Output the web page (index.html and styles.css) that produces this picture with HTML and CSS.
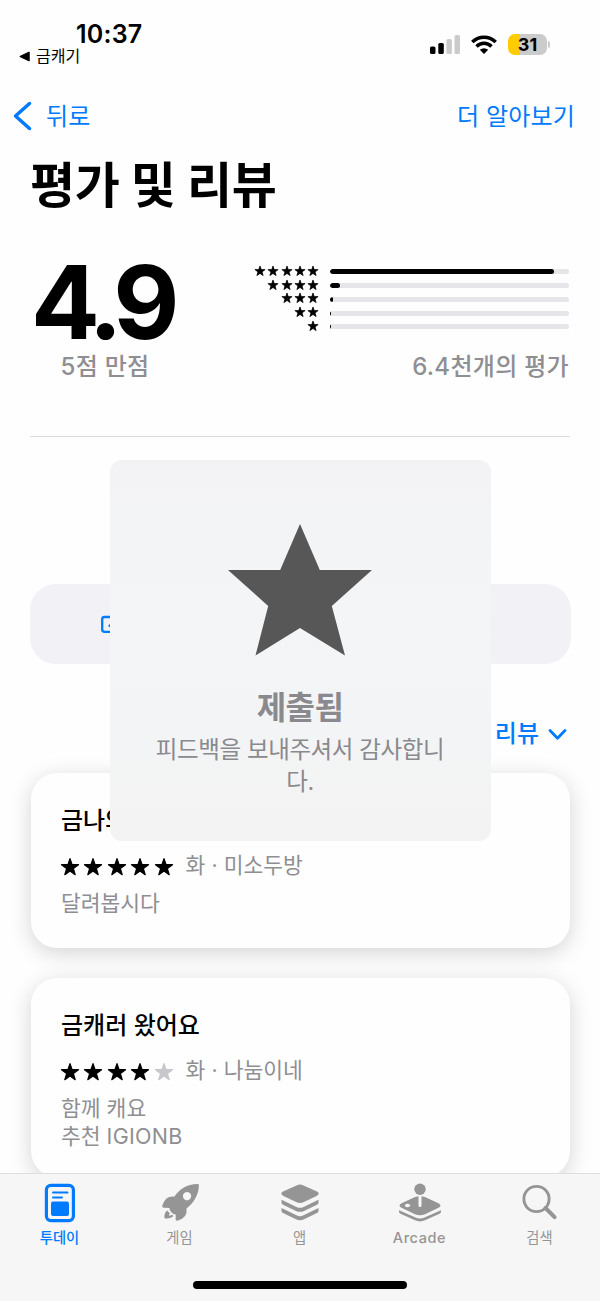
FILE: index.html
```html
<!DOCTYPE html>
<html lang="ko">
<head>
<meta charset="utf-8">
<title>평가 및 리뷰</title>
<link rel="stylesheet" href="styles.css">
</head>
<body>
<svg class="defs" width="0" height="0" aria-hidden="true">
  <symbol id="star" viewBox="0 0 20 20"><path d="M10 1.6 12.1 7.6 18.5 7.7 13.4 11.6 15.2 17.7 10 14.1 4.8 17.7 6.6 11.6 1.5 7.7 7.9 7.6Z" fill="currentColor" stroke="currentColor" stroke-width="1.2" stroke-linejoin="round"/></symbol>
</svg>
<div class="screen">
  <header class="status">
    <div class="status-left">
      <div class="clock">10:37</div>
      <div class="return"><svg width="11" height="11" viewBox="0 0 11 11"><path d="M.8 5.5 10.2 1v9z" stroke="#000" stroke-linejoin="round"/></svg><span>금캐기</span></div>
    </div>
    <div class="status-right">
      <svg width="30" height="19" viewBox="0 0 30 19"><rect y="11.5" width="5.5" height="7.5" rx="1.6"/><rect x="8.3" y="8" width="5.5" height="11" rx="1.6"/><g fill="#cbcbcb"><rect x="16.4" y="4" width="5.5" height="15" rx="1.6"/><rect x="24.5" width="5.5" height="19" rx="1.6"/></g></svg>
      <svg class="wifi" width="26" height="19" viewBox="0 0 26 19"><g fill="none" stroke="#000" stroke-width="3.5"><path d="M1.3 7.1C8 .5 18 .5 24.7 7.1"/><path d="M5.5 11.5C9.800 7.3 16.2 7.3 20.5 11.5"/></g><path d="M8.8 14.8Q13 11.5 17.2 14.8L13 19Z"/></svg>
      <div class="battery"><span>31</span></div><i class="battery-cap"></i>
    </div>
  </header>
  <nav class="nav">
    <a class="back"><svg width="19" height="30" viewBox="0 0 19 30"><path d="M16.5 2.5 2.5 15 16.5 27.5" fill="none" stroke="#007aff" stroke-width="3.5" stroke-linecap="round" stroke-linejoin="round"/></svg><span>뒤로</span></a>
    <a>더 알아보기</a>
  </nav>
  <main>
    <h1>평가 및 리뷰</h1>
    <section class="rating">
      <div class="score"><div class="num">4.9</div><div class="label">5점 만점</div></div>
      <div class="dist">
        <div class="rows">
          <div class="row"><div class="mini"><svg><use href="#star"/></svg><svg><use href="#star"/></svg><svg><use href="#star"/></svg><svg><use href="#star"/></svg><svg><use href="#star"/></svg></div><div class="bar"><i style="width:93.7%"></i></div></div>
          <div class="row"><div class="mini"><svg><use href="#star"/></svg><svg><use href="#star"/></svg><svg><use href="#star"/></svg><svg><use href="#star"/></svg></div><div class="bar"><i style="width:4.3%"></i></div></div>
          <div class="row"><div class="mini"><svg><use href="#star"/></svg><svg><use href="#star"/></svg><svg><use href="#star"/></svg></div><div class="bar"><i style="width:1.3%"></i></div></div>
          <div class="row"><div class="mini"><svg><use href="#star"/></svg><svg><use href="#star"/></svg></div><div class="bar"><i style="width:.2%"></i></div></div>
          <div class="row"><div class="mini"><svg><use href="#star"/></svg></div><div class="bar"><i style="width:.6%"></i></div></div>
        </div>
        <div class="label">6.4천개의 평가</div>
      </div>
    </section>
    <div class="write"><svg width="24" height="24" viewBox="0 0 24 24" fill="none" stroke="#007aff" stroke-width="2.3"><path d="M14 5H4.500Q2.200 5 2.200 7.200V17.500Q2.200 19.800 4.500 19.800H16Q18.300 19.800 18.300 17.500V10"/><path d="M8.800 14.500 20 3" stroke-width="2"/></svg></div>
    <div class="sort"><span>리뷰</span><svg width="19" height="13" viewBox="0 0 19 13"><path d="M2 2.500 9.500 10.200 17 2.500" fill="none" stroke="#007aff" stroke-width="2.800" stroke-linecap="round" stroke-linejoin="round"/></svg></div>
    <article class="card">
      <h2>금나와</h2>
      <div class="meta"><div class="stars"><svg><use href="#star"/></svg><svg><use href="#star"/></svg><svg><use href="#star"/></svg><svg><use href="#star"/></svg><svg><use href="#star"/></svg></div><span>화 · 미소두방</span></div>
      <p>달려봅시다</p>
    </article>
    <article class="card second">
      <h2>금캐러 왔어요</h2>
      <div class="meta"><div class="stars"><svg><use href="#star"/></svg><svg><use href="#star"/></svg><svg><use href="#star"/></svg><svg><use href="#star"/></svg><svg class="off"><use href="#star"/></svg></div><span>화 · 나눔이네</span></div>
      <p>함께 캐요<br>추천 <span class="latin">IGIONB</span></p>
    </article>
  </main>
  <div class="toast" role="status">
    <svg width="144" height="132" viewBox="0 0 144 132"><path d="M72 0 91.800 46H144L103.800 82 117 131.500 72 104 27.500 131.500 40.200 82 0 46H52.200Z" fill="#575757"/></svg>
    <strong>제출됨</strong>
    <p>피드백을 보내주셔서 감사합니<br>다.</p>
  </div>
  <footer class="tabs">
    <div class="tab-list">
      <div class="tab active"><svg width="44" height="40" viewBox="0 0 44 40"><rect x="8.400" y="2.400" width="27" height="35.200" rx="4.500" fill="none" stroke="currentColor" stroke-width="3.200"/><path d="M15 9.500H29.500M15 14.500H24" stroke="currentColor" stroke-width="2" stroke-linecap="round"/><rect x="13" y="18.500" width="18" height="14.500" rx="2" fill="currentColor"/></svg><span>투데이</span></div>
      <div class="tab"><svg width="44" height="40" viewBox="0 0 44 40"><path fill="currentColor" fill-rule="evenodd" d="M39.500 1Q41 .9 40.900 2.300C40.800 11 36.500 19.500 28.500 25.500Q29.800 34.500 20 37.500Q17.500 38.200 17.600 36L17.800 31.500Q15.500 31.800 13.600 29.500Q11 27.500 11.500 25L6 24.700Q3.500 24.600 4.600 21.800Q7.500 12.500 16.500 13.500C21.500 6 29 1 39.500 1ZM29 9a4.100 4.100 0 1 0 .1 0Z"/><path fill="currentColor" d="M9.200 27.500 12 30.500Q10.700 31.500 11 32.700Q13 32.500 13.600 31.700L15.400 32.800Q13.500 35.700 7.800 35.500Q6.300 35.500 6.400 34Q6.200 29.500 9.200 27.500Z"/></svg><span>게임</span></div>
      <div class="tab"><svg width="44" height="40" viewBox="0 0 44 40" fill="currentColor"><path d="M18.500 2.400Q22 .7 25.500 2.400L39 8.500Q42.500 10.500 39 12.700L26 19.100Q22 21 18 19.100L5 12.700Q1.500 10.500 5 8.500Z"/><path id="layer" d="M3.500 16.800 18.500 24Q22 25.700 25.500 24L40.500 16.800V20Q40.500 21 38.500 22L26 28Q22 29.700 18 28L5.500 22Q3.500 21 3.500 20Z"/><use href="#layer" y="8.300"/></svg><span>앱</span></div>
      <div class="tab"><svg width="44" height="40" viewBox="0 0 44 40" fill="currentColor"><circle cx="22" cy="6.200" r="5.700"/><path fill-rule="evenodd" d="M20.500 13.300V22.500Q20.500 24 22 24T23.500 22.500V13.300Q26 13.500 28 14.500L40.500 20.200Q44.500 22.500 40.500 24.800L27 31.200Q22 33.500 17 31.200L3.500 24.800Q-.5 22.500 3.500 20.200L16 14.500Q18 13.500 20.500 13.300ZM9.500 20.800a2.700 1.700 0 1 0 .1 0Z"/><path d="M1 27.200 17.500 34.500Q22 36.300 26.500 34.500L43 27.200V29Q43 30 41 31L27 37.300Q22 39.500 17 37.300L3 31Q1 30 1 29Z"/></svg><span class="latin">Arcade</span></div>
      <div class="tab"><svg width="44" height="40" viewBox="0 0 44 40" fill="none" stroke="currentColor"><circle cx="18.500" cy="16" r="12.600" stroke-width="2.900"/><path d="M27.500 25 36.600 34.200" stroke-width="4" stroke-linecap="round"/></svg><span>검색</span></div>
    </div>
    <div class="home"></div>
  </footer>
</div>
</body>
</html>
```
FILE: styles.css
```css
* { box-sizing: border-box; }
body { margin: 0; background: #fefefe; color: #000; font-family: Inter, "Noto Sans CJK KR", sans-serif; }
h1, h2, p { margin: 0; }
svg { display: block; flex: none; }
.defs { position: absolute; }
.screen { position: relative; width: 600px; height: 1301px; overflow: hidden; white-space: nowrap; }
.status { height: 86px; padding: 21px 50px 0 19px; display: flex; justify-content: space-between; }
.clock { padding-left: 57px; font-size: 25px; line-height: 26px; font-weight: 600; letter-spacing: .2px; }
.return { display: flex; align-items: center; gap: 6px; font-size: 16px; line-height: 18px; }
.status-right { display: flex; align-items: center; height: 20px; margin-top: 13px; }
.wifi { margin-left: 11px; }
.battery { margin-left: 11px; width: 39px; height: 21px; border-radius: 7px; background: linear-gradient(90deg, #fc0 12px, #cbcbcb 12px); font-size: 18px; line-height: 21px; font-weight: 700; text-align: center; }
.battery-cap { width: 2px; height: 7px; margin-left: 1px; background: #cbcbcb; border-radius: 0 3px 3px 0; }
.nav { height: 60px; padding: 0 25px 0 13px; display: flex; justify-content: space-between; align-items: center; color: #007aff; font-size: 24px; line-height: 30px; letter-spacing: .15px; }
.nav > a { padding-top: 1px; }
.back { display: flex; align-items: center; gap: 14px; }
.back svg { margin-top: -1px; }
h1 { height: 78px; padding-left: 30px; font-size: 49px; line-height: 79px; font-weight: 700; letter-spacing: -.3px; }
.rating { height: 213px; margin: 0 30px; padding-top: 39px; border-bottom: 1px solid #dcdcdc; display: flex; justify-content: space-between; }
.score { width: 150px; text-align: center; }
.num { height: 80px; padding-left: 1px; font-size: 102px; line-height: 79px; font-weight: 700; letter-spacing: -8px; text-align: left; }
.label { height: 48px; font-size: 24px; line-height: 48px; font-weight: 500; letter-spacing: .3px; color: #8e8e93; }
.dist { width: 319px; padding-right: 1px; text-align: right; }
.rows { height: 80px; padding-top: 1px; }
.row { height: 13.75px; display: flex; justify-content: flex-end; align-items: center; gap: 11px; }
.mini { display: flex; gap: 1.2px; }
.mini svg { width: 12px; height: 12px; }
.bar { width: 239px; height: 5px; border-radius: 3px; background: #e5e5ea; overflow: hidden; position: relative; top: 1px; }
.bar i { display: block; height: 5px; border-radius: 3px; background: #000; }
.write { width: 541px; height: 80px; margin: 147px 0 0 30px; padding-left: 69.5px; border-radius: 26px; background: #f2f1f6; display: flex; align-items: center; }
.sort { height: 109px; padding: 31px 33px 0 0; display: flex; justify-content: flex-end; align-items: center; gap: 9px; color: #007aff; font-size: 24px; line-height: 30px; font-weight: 500; }
.card { width: 539px; height: 175px; margin-left: 30.5px; padding: 32px 30.5px; border-radius: 26px; background: #fefefe; box-shadow: 0 5px 22px rgba(0,0,0,.17); }
.second { height: 199px; margin-top: 30px; }
h2 { height: 46px; font-size: 24px; line-height: 32px; font-weight: 500; }
.meta { height: 28px; display: flex; align-items: center; gap: 12px; color: #8e8e93; font-size: 21.5px; line-height: 28px; }
.stars { display: flex; gap: 3.4px; color: #000; margin: 3px 0 0 -1px; }
.stars svg { width: 20px; height: 20px; }
.stars .off { color: #c7c7cc; }
.card p { margin-top: 10px; font-size: 21.5px; line-height: 28px; color: #8e8e93; }
.card .latin { letter-spacing: .3px; }
.toast { position: absolute; left: 109.5px; top: 459.5px; width: 381px; height: 381px; padding-top: 64px; display: flex; flex-direction: column; align-items: center; border-radius: 12px; background: linear-gradient(#f3f3f5, #f3f5f7 45%, #f3f3f3); color: #89898e; text-align: center; }
.toast strong { margin-top: 31px; font-size: 32px; line-height: 42px; font-weight: 700; letter-spacing: -.6px; }
.toast p { margin-top: 5px; font-size: 23.5px; line-height: 32px; letter-spacing: -.4px; }
.tabs { position: absolute; left: 0; top: 1173px; width: 600px; height: 128px; border-top: 1px solid #dedede; background: #f6f6f6; }
.tab-list { display: flex; height: 107px; padding-top: 9px; margin-left: -.5px; }
.tab { width: 120px; display: flex; flex-direction: column; align-items: center; color: #959595; font-size: 14.3px; line-height: 20px; font-weight: 400; gap: 5px; }
.tab.active { color: #007aff; font-weight: 500; }
.tab .latin { font-size: 14.5px; font-weight: 500; letter-spacing: .6px; }
.home { width: 214px; height: 8px; margin: 0 auto; border-radius: 4px; background: #000; }
```
